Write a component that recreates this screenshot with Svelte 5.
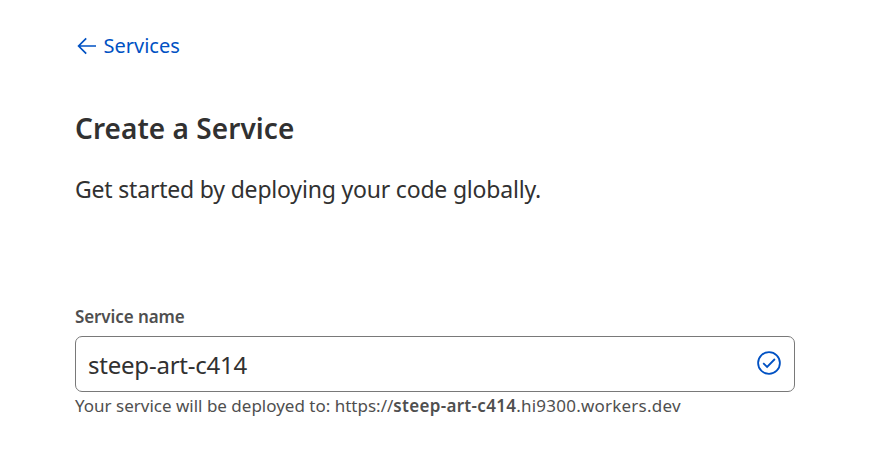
<script>
  let name = $state('steep-art-c414');
</script>

<main>
  <a class="back" href="#services">
    <svg width="20" height="18" viewBox="0 0 20 18" fill="none" stroke="currentColor" stroke-width="1.7"><path d="M19 9H1.8M9.2 1.3 1.6 9l7.6 7.7" /></svg>
    <span>Services</span>
  </a>
  <h1>Create a Service</h1>
  <p class="intro">Get started by deploying your code globally.</p>
  <label for="name">Service name</label>
  <div class="field">
    <input id="name" bind:value={name} spellcheck="false" />
    <svg width="24" height="24" viewBox="0 0 24 24" fill="none" stroke="currentColor" stroke-width="1.8"><circle cx="12" cy="12" r="10.9" /><path d="m6.2 12.2 3.9 3.7 7.8-7.9" /></svg>
  </div>
  <p class="hint">Your service will be deployed to: https://<b>{name}</b><span>.hi9300.workers.dev</span></p>
</main>

<style>
  :global(body) { background: #fff; }
  main { display: flex; flex-direction: column; align-items: flex-start; width: 720px; padding: 31px 0 0 75px; font-family: "Noto Sans", sans-serif; color: #313131; }
  h1, p { margin: 0; }
  .back { display: flex; align-items: center; gap: 6.5px; height: 30px; padding-left: 2px; color: #0051c3; text-decoration: none; font-size: 20px; line-height: 30px; }
  h1 { margin-top: 47px; font-size: 28px; line-height: 40px; font-weight: 600; letter-spacing: 0.05px; }
  .intro { margin-top: 23px; font-size: 23px; line-height: 36px; letter-spacing: -0.19px; }
  label { margin-top: 98px; font-size: 17px; line-height: 24px; font-weight: 600; letter-spacing: -0.1px; color: #4f4f4f; }
  .field { display: flex; align-items: center; box-sizing: border-box; width: 720px; height: 56px; margin-top: 7px; padding: 0 13px 2px 12px; border: 1px solid #797979; border-radius: 7px; color: #0051c3; }
  input { flex: 1; min-width: 0; height: 50px; padding: 2px 0 0; border: 0; outline: 0; background: none; font: 24px "Noto Sans", sans-serif; letter-spacing: -0.22px; color: #313131; }
  .hint { margin-top: 2px; font-size: 17px; line-height: 24px; color: #4f4f4f; white-space: nowrap; }
  b { font-weight: 600; letter-spacing: 0.31px; }
  .hint span { letter-spacing: 0.22px; }
</style>
